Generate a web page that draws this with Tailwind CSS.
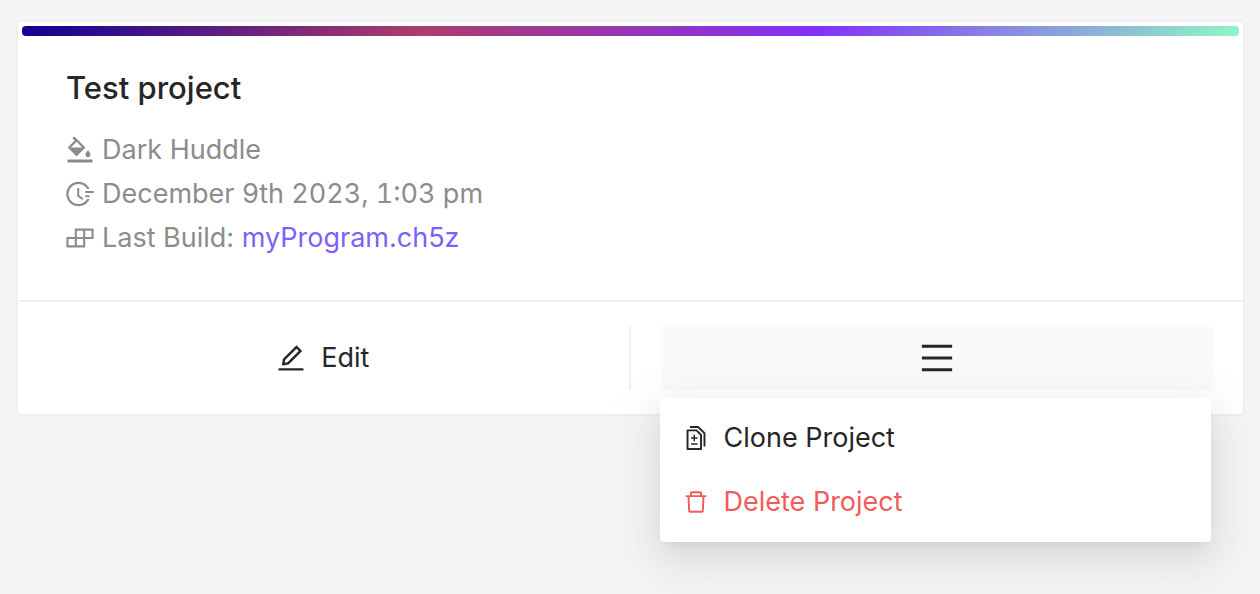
<!DOCTYPE html>
<html lang="en">
<head>
<meta charset="utf-8">
<meta name="viewport" content="width=device-width, initial-scale=1">
<title>Test project</title>
<script src="https://cdn.jsdelivr.net/npm/@tailwindcss/browser@4"></script>
</head>
<body class="min-h-screen bg-[#f5f5f8] pt-5 pr-[15px] pl-4 font-[Inter,sans-serif] text-[27px] leading-[44px] text-[#262626]">
<article class="rounded-[4px] border-2 border-[#f0f0f0] bg-white">
  <div class="p-1 pb-0">
    <div class="h-[10px] rounded-[4px] bg-[linear-gradient(135deg,#0e0094,#ad3d6b_33%,#8230f7_65%,#90f8c4)]"></div>
  </div>
  <div class="px-12 pt-7 pb-10">
    <h1 class="mb-4 text-[31px] leading-[48px] font-medium">Test project</h1>
    <ul class="text-[#8c8c8c]">
      <li class="flex items-center gap-2">
        <svg class="size-7 shrink-0" viewBox="64 64 896 896" fill="currentColor" aria-hidden="true"><path d="M766.4 744.3c43.7 0 79.4-36.2 79.4-80.5 0-53.5-79.4-140.8-79.4-140.8S687 610.3 687 663.8c0 44.3 35.7 80.5 79.4 80.5zm-377.1-44.1c7.1 7.1 18.6 7.1 25.6 0l256.1-256c7.1-7.1 7.1-18.6 0-25.6l-256-256c-.6-.6-1.3-1.2-2-1.7l-78.2-78.2a9.11 9.11 0 00-12.8 0l-48 48a9.11 9.11 0 000 12.8l67.2 67.2-207.8 207.9c-7.1 7.1-7.1 18.6 0 25.6l255.9 256zm12.9-448.6l178.9 178.9H223.4l178.8-178.9zM904 816H120c-4.4 0-8 3.6-8 8v80c0 4.4 3.6 8 8 8h784c4.4 0 8-3.6 8-8v-80c0-4.4-3.6-8-8-8z"/></svg>
        <span>Dark Huddle</span>
      </li>
      <li class="flex items-center gap-2">
        <svg class="size-7 shrink-0" viewBox="64 64 896 896" fill="currentColor" aria-hidden="true"><path d="M945 412H689c-4.4 0-8 3.6-8 8v48c0 4.4 3.6 8 8 8h256c4.4 0 8-3.6 8-8v-48c0-4.4-3.6-8-8-8zM811 548H689c-4.4 0-8 3.6-8 8v48c0 4.4 3.6 8 8 8h122c4.4 0 8-3.6 8-8v-48c0-4.4-3.6-8-8-8zM477.3 322.5H434c-6.2 0-11.2 5-11.2 11.2v248c0 3.6 1.7 6.9 4.6 9l148.9 108.6c5 3.6 12 2.6 15.6-2.4l25.7-35.1v-.1c3.6-5 2.5-12-2.5-15.6l-126.7-91.6V333.7c.1-6.2-5-11.2-11.1-11.2z"/><path d="M804.8 673.9H747c-5.6 0-10.9 2.9-13.9 7.7a321 321 0 01-44.5 55.7 317.17 317.17 0 01-101.3 68.3c-39.3 16.6-81 25-124 25-43.1 0-84.8-8.4-124-25-37.9-16-72-39-101.3-68.3s-52.3-63.4-68.3-101.3c-16.6-39.2-25-80.9-25-124 0-43.1 8.4-84.7 25-124 16-37.9 39-72 68.3-101.3 29.3-29.3 63.4-52.3 101.3-68.3 39.2-16.6 81-25 124-25 43.1 0 84.8 8.4 124 25 37.9 16 72 39 101.3 68.3a321 321 0 0144.5 55.7c3 4.8 8.3 7.7 13.9 7.7h57.8c6.9 0 11.3-7.2 8.2-13.3-65.2-129.7-197.4-214-345-215.7-216.1-2.7-395.6 174.2-396 390.1C71.6 727.5 246.9 903 463.2 903c149.5 0 283.9-84.6 349.8-215.8a9.18 9.18 0 00-8.2-13.3z"/></svg>
        <span class="tabular-nums">December 9th 2023, 1:03 pm</span>
      </li>
      <li class="flex items-center gap-2">
        <svg class="size-7 shrink-0" viewBox="64 64 896 896" fill="currentColor" aria-hidden="true"><path d="M916 210H376c-17.7 0-32 14.3-32 32v236H108c-17.7 0-32 14.3-32 32v272c0 17.7 14.3 32 32 32h540c17.7 0 32-14.3 32-32V546h236c17.7 0 32-14.3 32-32V242c0-17.7-14.3-32-32-32zm-504 68h200v200H412V278zm-68 468H144V546h200v200zm268 0H412V546h200v200zm268-268H680V278h200v200z"/></svg>
        <span>Last Build: <a href="#" class="text-[#7f5ff9]">myProgram.ch5z</a></span>
      </li>
    </ul>
  </div>
  <footer class="grid grid-cols-2 border-t-2 border-[#f0f0f0] py-6">
    <div class="flex border-r-2 border-[#f0f0f0]">
      <button type="button" class="flex h-16 flex-1 items-center justify-center gap-4">
        <svg class="size-7" viewBox="64 64 896 896" fill="currentColor" aria-hidden="true"><path d="M257.7 752c2 0 4-.2 6-.5L431.9 722c2-.4 3.9-1.3 5.3-2.8l423.9-423.9a9.96 9.96 0 000-14.1L694.9 114.9c-1.9-1.9-4.4-2.9-7.1-2.9s-5.2 1-7.1 2.9L256.8 538.8c-1.5 1.5-2.4 3.3-2.8 5.3l-29.5 168.2a33.5 33.5 0 009.4 29.8c6.6 6.4 14.9 9.9 23.8 9.9zm67.4-174.4L687.8 215l73.3 73.3-362.7 362.6-88.9 15.7 15.6-89zM880 836H144c-17.7 0-32 14.3-32 32v36c0 4.4 3.6 8 8 8h784c4.4 0 8-3.6 8-8v-36c0-17.7-14.3-32-32-32z"/></svg>
        Edit
      </button>
    </div>
    <div class="relative mx-[30px]">
      <button type="button" aria-label="Project menu" aria-haspopup="menu" aria-expanded="true" class="flex h-16 w-full items-center justify-center rounded-[4px] bg-[#fafafa]">
        <svg class="size-[34px]" viewBox="64 64 896 896" fill="currentColor" aria-hidden="true"><path d="M904 160H120c-4.4 0-8 3.6-8 8v64c0 4.4 3.6 8 8 8h784c4.4 0 8-3.6 8-8v-64c0-4.4-3.6-8-8-8zm0 624H120c-4.4 0-8 3.6-8 8v64c0 4.4 3.6 8 8 8h784c4.4 0 8-3.6 8-8v-64c0-4.4-3.6-8-8-8zm0-312H120c-4.4 0-8 3.6-8 8v64c0 4.4 3.6 8 8 8h784c4.4 0 8-3.6 8-8v-64c0-4.4-3.6-8-8-8z"/></svg>
      </button>
      <div role="menu" class="absolute top-full right-0.5 -left-px mt-2 rounded-[4px] bg-white py-2 shadow-[0_6px_12px_-8px_rgb(0_0_0/0.12),0_12px_32px_0_rgb(0_0_0/0.08),0_18px_56px_16px_rgb(0_0_0/0.05)]">
        <button type="button" role="menuitem" class="flex h-16 w-full items-center gap-4 px-6">
          <svg class="size-6" viewBox="64 64 896 896" fill="currentColor" aria-hidden="true"><path d="M476 399.1c0-3.9-3.1-7.1-7-7.1h-42c-3.8 0-7 3.2-7 7.1V484h-84.5c-4.1 0-7.5 3.1-7.5 7v42c0 3.8 3.4 7 7.5 7H420v84.9c0 3.9 3.2 7.1 7 7.1h42c3.9 0 7-3.2 7-7.1V540h84.5c4.1 0 7.5-3.2 7.5-7v-42c0-3.9-3.4-7-7.5-7H476v-84.9zM560.5 704h-225c-4.1 0-7.5 3.2-7.5 7v42c0 3.8 3.4 7 7.5 7h225c4.1 0 7.5-3.2 7.5-7v-42c0-3.8-3.4-7-7.5-7zm-7.1-502.6c-6-6-14.2-9.4-22.7-9.4H192c-17.7 0-32 14.3-32 32v704c0 17.7 14.3 32 32 32h512c17.7 0 32-14.3 32-32V397.3c0-8.5-3.4-16.6-9.4-22.6L553.4 201.4zM664 888H232V264h282.2L664 413.8V888zm190.2-581.4L611.3 72.9c-6-5.7-13.9-8.9-22.2-8.9H296c-4.4 0-8 3.6-8 8v56c0 4.4 3.6 8 8 8h277l219 210.6V824c0 4.4 3.6 8 8 8h56c4.4 0 8-3.6 8-8V329.6c0-8.7-3.5-17-9.8-23z"/></svg>
          Clone Project
        </button>
        <button type="button" role="menuitem" class="flex h-16 w-full items-center gap-4 px-6 text-[#f25c58]">
          <svg class="size-6" viewBox="64 64 896 896" fill="currentColor" aria-hidden="true"><path d="M360 184h-8c4.4 0 8-3.6 8-8v8h304v-8c0 4.4 3.6 8 8 8h-8v72h72v-80c0-35.3-28.7-64-64-64H352c-35.3 0-64 28.7-64 64v80h72v-72zm504 72H160c-17.7 0-32 14.3-32 32v32c0 4.4 3.6 8 8 8h60.4l24.7 523c1.6 34.1 29.8 61 63.9 61h454c34.2 0 62.3-26.8 63.9-61l24.7-523H888c4.4 0 8-3.6 8-8v-32c0-17.7-14.3-32-32-32zM731.3 840H292.7l-24.2-512h487l-24.2 512z"/></svg>
          Delete Project
        </button>
      </div>
    </div>
  </footer>
</article>
</body>
</html>
